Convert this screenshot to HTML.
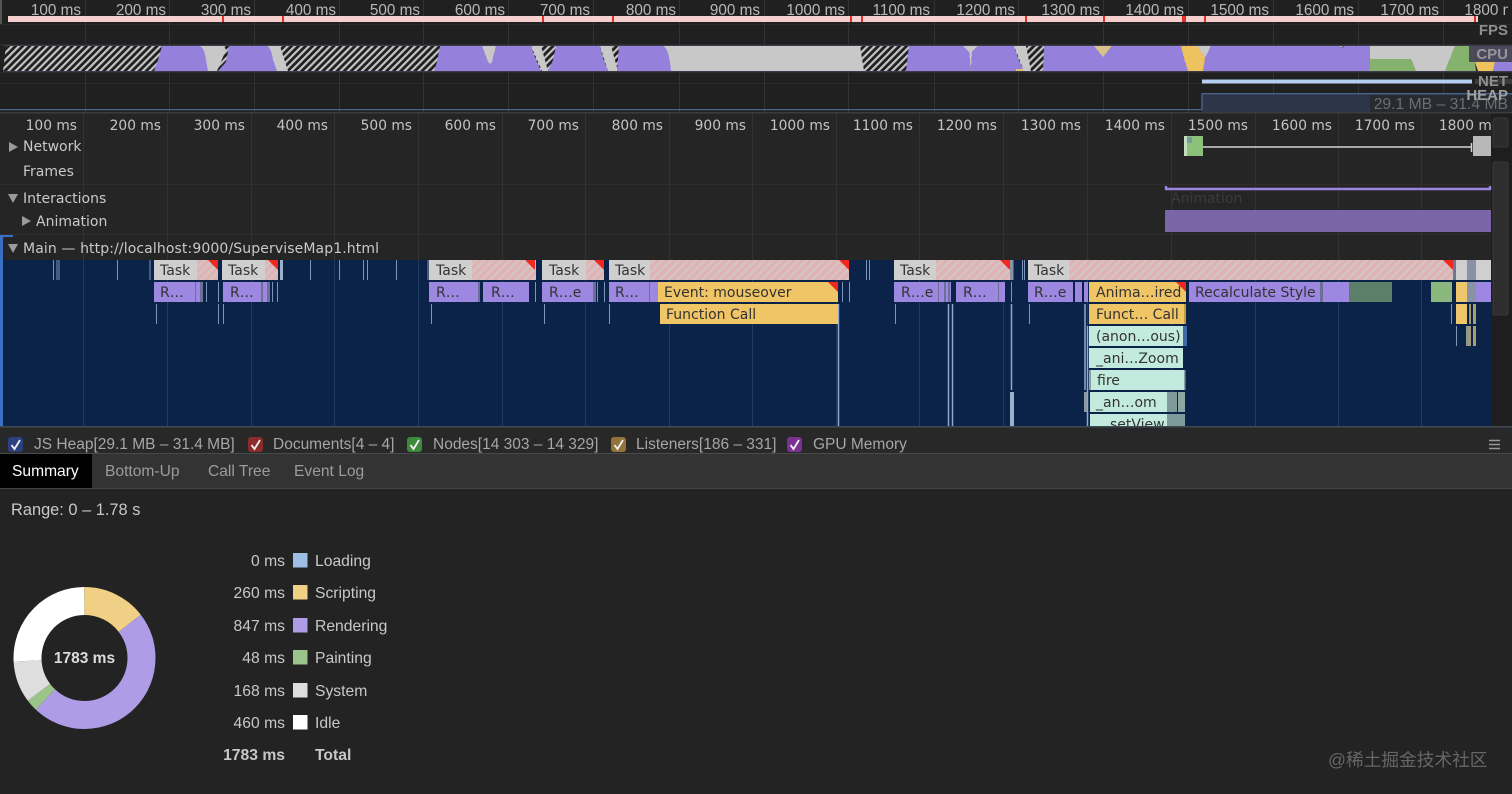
<!DOCTYPE html>
<html><head><meta charset="utf-8"><title>Performance</title>
<style>
html,body{margin:0;padding:0;background:#232323;width:1512px;height:794px;overflow:hidden}
svg{display:block;filter:blur(.3px)}
.ov{font:15.3px "Liberation Sans",sans-serif;fill:#b8b8b8;text-anchor:end}
.rl{font:13.8px "DejaVu Sans",sans-serif;fill:#c4c4c4;text-anchor:end}
.tk{font:14px "DejaVu Sans",sans-serif;fill:#c9c9c9}
.fl{font:14px "DejaVu Sans",sans-serif;fill:#333}
.lb{font:bold 15px "Liberation Sans",sans-serif;fill:#8f8f8f}
.lg{font:15.5px "Liberation Sans",sans-serif;fill:#a6a6a6}
.tb{font:15.6px "Liberation Sans",sans-serif;fill:#9c9c9c}
.sm{font:15.7px "Liberation Sans",sans-serif;fill:#c8c8c8}
.r{text-anchor:end}
.b{font-weight:bold}
</style></head><body>
<svg width="1512" height="794" viewBox="0 0 1512 794" xmlns="http://www.w3.org/2000/svg">
<defs>
<pattern id="h" width="5" height="5" patternUnits="userSpaceOnUse" patternTransform="rotate(45)"><rect width="5" height="5" fill="#1f1f1f"/><rect width="2.2" height="5" fill="#c4c4c4"/></pattern>
<pattern id="t" width="6" height="6" patternUnits="userSpaceOnUse" patternTransform="rotate(45)"><rect width="6" height="6" fill="#d6c2c2"/><rect width="3" height="6" fill="#e2b2b2"/></pattern>
<clipPath id="flame"><rect x="3" y="260" width="1488" height="166"/></clipPath>
<clipPath id="ruler"><rect x="0" y="113" width="1491" height="24"/></clipPath>
<clipPath id="top"><rect x="0" y="0" width="1508" height="30"/></clipPath>
</defs>

<!-- backgrounds -->
<rect width="1512" height="794" fill="#232323"/>
<rect width="1512" height="113" fill="#202020"/>
<rect y="113" width="1512" height="147" fill="#252525"/>
<rect x="1491" y="113" width="21" height="314" fill="#1e1e1e"/>

<!-- overview grid -->
<path stroke="#333" stroke-width="1" fill="none" d="M85.5 0V112M169.5 0V112M254.5 0V112M339.5 0V112M423.5 0V112M508.5 0V112M593.5 0V112M679.5 0V112M764.5 0V112M848.5 0V112M934.5 0V112M1018.5 0V112M1103.5 0V112M1188.5 0V112M1273.5 0V112M1358.5 0V112M1443.5 0V112"/>
<path stroke="#2b2b2b" d="M0 24.5H1512M0 44.5H1512M0 72.5H1512M0 83.5H1512"/>
<rect x="0" y="0" width="2" height="24" fill="#555"/>

<!-- overview labels -->
<g class="ov" clip-path="url(#top)">
<text x="81" y="15">100 ms</text><text x="166" y="15">200 ms</text><text x="251" y="15">300 ms</text><text x="336" y="15">400 ms</text><text x="420" y="15">500 ms</text><text x="505" y="15">600 ms</text><text x="590" y="15">700 ms</text><text x="676" y="15">800 ms</text><text x="760" y="15">900 ms</text><text x="845" y="15">1000 ms</text><text x="930" y="15">1100 ms</text><text x="1015" y="15">1200 ms</text><text x="1100" y="15">1300 ms</text><text x="1184" y="15">1400 ms</text><text x="1269" y="15">1500 ms</text><text x="1354" y="15">1600 ms</text><text x="1439" y="15">1700 ms</text><text x="1523" y="15">1800 ms</text>
</g>

<!-- FPS -->
<rect x="8" y="16" width="1470" height="6" fill="#f6cfcf"/>
<path stroke="#e0302c" stroke-width="2" d="M223 16V22M283 16V22M543 16V22M613 16V22M851 16V22M862 16V22M1026 16V22M1104 16V22M1183 16V22M1185 16V22M1205 16V22M1475 16V22"/>

<!-- CPU -->
<polygon points="6,46 1473,46 1473,71 3,71" fill="url(#h)"/>
<g fill="#c8c8c8">
<polygon points="198,46 224,46 226,50 217,71 206,71"/>
<polygon points="266,46 280,46 288,71 274,71"/>
<polygon points="482,46 496,46 492,62 490,64 488,62"/>
<polygon points="531,46 541,46 548,71 542,71"/>
<polygon points="600,46 611,46 618,71 608,71"/>
<polygon points="663,46 860,46 864,71 671,71"/>
<polygon points="963,46 978,46 972,52 971,71 969,52"/>
<polygon points="1014,46 1026,46 1031,71 1024,71"/>
<polygon points="1197,46 1211,46 1205,58"/>
<polygon points="1370,46 1455,46 1445,71 1416,71 1411,59 1370,59"/>
</g>
<g fill="#9580dc">
<path d="M162 46H199Q204 46 206 60L208 71H154L158 60Z"/>
<path d="M229 46H266Q271 46 273 60L277 71H218L226 62Z"/>
<path d="M440 46H482L488 62 490 64 492 62 496 46H531L534 55 541 71H434L437 62Z"/>
<path d="M556 46H600L603 58 608 71H548L553 60Z"/>
<path d="M619 46H663Q669 48 671 71H617Z"/>
<path d="M909 46H963L969 52 971 71 972 52 978 46H1014L1018 58 1024 71H906Z"/>
<path d="M1044 46H1094L1103 57 1112 46H1181L1184 58 1188 71H1043Z"/>
<path d="M1211 46H1340L1342 48 1344 46H1370V71H1203L1205 58Z"/>
<polygon points="1473,46 1512,46 1512,71 1493,71 1495,62 1475,62"/>
</g>
<polygon points="1094,46 1112,46 1103,57" fill="#d8c48a"/>
<polygon points="1181,46 1197,46 1205,58 1203,71 1188,71 1184,58" fill="#eec35f"/>
<polygon points="1370,59 1411,59 1416,71 1370,71" fill="#85b36d"/>
<polygon points="1455,46 1473,46 1475,62 1476,71 1445,71" fill="#85b36d"/>
<polygon points="1475,62 1495,62 1493,71 1478,71" fill="#eec35f"/>
<rect x="1016" y="69" width="8" height="2" fill="#e0c070"/>
<path stroke="#3c3a4a" d="M3 45.5H1512M3 71.5H1512"/>
<rect x="1469" y="46" width="43" height="16" fill="#45434f" opacity=".92"/>
<text class="lb" x="1508" y="35" text-anchor="end">FPS</text>
<text class="lb" x="1508" y="59" text-anchor="end" style="fill:#96969c">CPU</text>

<!-- NET -->
<rect x="1202" y="79.5" width="270" height="4" fill="#b4cdf0"/>
<rect x="1475" y="79" width="37" height="5" fill="#3a3a3a"/>

<!-- HEAP -->
<polygon points="1202,94 1512,94 1512,112 1202,112" fill="#2c3648"/>
<path fill="none" stroke="#4f6f9c" stroke-width="1.2" d="M0 109.7H1202V93.7H1512"/>
<rect x="1370" y="95" width="142" height="17" fill="#272a30"/>
<text x="1508" y="109" text-anchor="end" style="font:15.7px 'Liberation Sans',sans-serif;fill:#6e6e6e">29.1 MB – 31.4 MB</text>
<text class="lb" x="1508" y="86" text-anchor="end">NET</text>
<text class="lb" x="1508" y="100" text-anchor="end" style="fill:#a0a0a0">HEAP</text>
<rect y="112" width="1512" height="1.5" fill="#3c3c3c"/>

<!-- lower grid -->
<path stroke="#333" d="M83.5 113V260M167.5 113V260M251.5 113V260M334.5 113V260M418.5 113V260M502.5 113V260M585.5 113V260M669.5 113V260M752.5 113V260M836.5 113V260M919.5 113V260M1003.5 113V260M1087.5 113V260M1171.5 113V260M1255.5 113V260M1338.5 113V260M1421.5 113V260"/>
<path stroke="#2e2e2e" d="M0 184.5H1491M0 234.5H1491"/>

<!-- ruler -->
<g class="rl" clip-path="url(#ruler)">
<text x="77" y="130">100 ms</text><text x="161" y="130">200 ms</text><text x="245" y="130">300 ms</text><text x="328" y="130">400 ms</text><text x="412" y="130">500 ms</text><text x="496" y="130">600 ms</text><text x="579" y="130">700 ms</text><text x="663" y="130">800 ms</text><text x="746" y="130">900 ms</text><text x="830" y="130">1000 ms</text><text x="913" y="130">1100 ms</text><text x="997" y="130">1200 ms</text><text x="1081" y="130">1300 ms</text><text x="1165" y="130">1400 ms</text><text x="1248" y="130">1500 ms</text><text x="1332" y="130">1600 ms</text><text x="1415" y="130">1700 ms</text><text x="1499" y="130">1800 ms</text>
</g>

<!-- track headers -->
<polygon points="9,142 9,152 18,147" fill="#9a9a9a"/>
<text class="tk" x="23" y="151">Network</text>
<text class="tk" x="23" y="176">Frames</text>
<polygon points="8,194 18,194 13,203" fill="#9a9a9a"/>
<text class="tk" x="23" y="203">Interactions</text>
<polygon points="22,216 22,226 31,221" fill="#9a9a9a"/>
<text class="tk" x="36" y="226">Animation</text>
<polygon points="8,244 18,244 13,253" fill="#9a9a9a"/>
<text class="tk" x="23" y="253" textLength="356">Main — http://localhost:9000/SuperviseMap1.html</text>

<!-- network -->
<rect x="1184" y="136" width="19" height="20" fill="#8dc07a"/>
<rect x="1184" y="136" width="3" height="20" fill="#c4dcc0"/>
<rect x="1187" y="137" width="5" height="6" fill="#6f9fa0"/>
<path stroke="#d4d4d4" stroke-width="1.5" d="M1203 147H1471M1471.5 143V152"/>
<rect x="1473" y="136" width="18" height="20" fill="#b8b8b8"/>

<!-- interactions -->
<path fill="none" stroke="#9a85e0" stroke-width="2.4" d="M1166 186V189H1490V186"/>
<text x="1171" y="203" style="font:14px 'DejaVu Sans',sans-serif;fill:#3a3a3a">Animation</text>
<rect x="1165" y="210" width="326" height="22" fill="#7a65a8"/>

<!-- flame -->
<rect x="0" y="235" width="13" height="2" fill="#3a6fc4"/>
<rect x="0" y="235" width="3" height="191" fill="#3a6fc4"/>
<rect x="3" y="260" width="1488" height="166" fill="#0b2249"/>
<path stroke="#1e3a63" d="M83.5 260V426M167.5 260V426M251.5 260V426M334.5 260V426M418.5 260V426M502.5 260V426M585.5 260V426M669.5 260V426M752.5 260V426M836.5 260V426M919.5 260V426M1003.5 260V426M1087.5 260V426M1171.5 260V426M1255.5 260V426M1338.5 260V426M1421.5 260V426"/>

<g clip-path="url(#flame)">
<!-- small slices -->
<g stroke="#7c95b8" fill="none">
<path d="M53.5 260V280M57 260V280M59 260V280M117.5 260V280M150 260V280M281.5 260V280M310.5 260V280M339.5 260V280M363.5 260V280M367.5 260V280M396.5 260V280M428 260V280M866.5 260V280M869.5 260V280M1024.5 260V280M1022.5 260V280M1013 260V280"/>
<path d="M206.5 282V302M218.5 282V302M272.5 282V302M277.5 282V302M535.5 282V302M597.5 282V302M604.5 282V302M842.5 282V302M849.5 282V302M1011.5 282V302"/>
<path d="M156.5 304V324M218.5 304V324M223.5 304V324M431.5 304V324M544.5 304V324M609.5 304V324M895.5 304V324M1029.5 304V324M1456.5 326V346M1451.5 304V324"/>
<path stroke="#8fa9cc" stroke-width="1.5" d="M838.5 304V426M948.5 304V426M952.5 304V426M1011.5 304V390"/>
<path stroke="#8fa9cc" stroke-width="1.5" d="M1085 304V390M1087.5 326V426"/>
</g>
<rect x="1010" y="392" width="4" height="34" fill="#9ab0c8"/>
<rect x="1084" y="392" width="3" height="20" fill="#8c9aa8"/>

<!-- Task row -->
<g>
<rect x="154" y="260" width="64" height="20" fill="url(#t)"/><rect x="154" y="260" width="43" height="20" fill="#cfcfcf"/><polygon points="208,260 218,260 218,270" fill="#f0281e"/>
<rect x="222" y="260" width="56" height="20" fill="url(#t)"/><rect x="222" y="260" width="43" height="20" fill="#cfcfcf"/><polygon points="268,260 278,260 278,270" fill="#f0281e"/>
<rect x="280" y="260" width="3" height="20" fill="#9ab0c8"/>
<rect x="429" y="260" width="107" height="20" fill="url(#t)"/><rect x="429" y="260" width="43" height="20" fill="#cfcfcf"/><polygon points="525,260 535,260 535,270" fill="#f0281e"/>
<rect x="542" y="260" width="62" height="20" fill="url(#t)"/><rect x="542" y="260" width="44" height="20" fill="#cfcfcf"/><polygon points="594,260 604,260 604,270" fill="#f0281e"/>
<rect x="609" y="260" width="240" height="20" fill="url(#t)"/><rect x="609" y="260" width="41" height="20" fill="#cfcfcf"/><polygon points="839,260 849,260 849,270" fill="#f0281e"/>
<rect x="894" y="260" width="116" height="20" fill="url(#t)"/><rect x="894" y="260" width="42" height="20" fill="#cfcfcf"/><polygon points="1000,260 1010,260 1010,270" fill="#f0281e"/><rect x="1010" y="260" width="3" height="20" fill="#8c94a4"/>
<rect x="1028" y="260" width="425" height="20" fill="url(#t)"/><rect x="1028" y="260" width="41" height="20" fill="#cfcfcf"/><polygon points="1443,260 1453,260 1453,270" fill="#f0281e"/>
<rect x="1456" y="260" width="35" height="20" fill="#cfcfcf"/><rect x="1467" y="260" width="9" height="20" fill="#8a93a6"/><rect x="1453" y="260" width="3" height="20" fill="#6b7a90"/>
</g>
<g class="fl">
<text x="160" y="275">Task</text><text x="228" y="275">Task</text><text x="436" y="275">Task</text><text x="549" y="275">Task</text><text x="615" y="275">Task</text><text x="900" y="275">Task</text><text x="1034" y="275">Task</text>
</g>

<!-- row 2 -->
<g fill="#9d87e0">
<rect x="154" y="282" width="46" height="20"/><rect x="223" y="282" width="44" height="20"/><rect x="429" y="282" width="51" height="20"/><rect x="483" y="282" width="46" height="20"/><rect x="542" y="282" width="54" height="20"/><rect x="609" y="282" width="49" height="20"/><rect x="894" y="282" width="57" height="20"/><rect x="956" y="282" width="49" height="20"/><rect x="1028" y="282" width="45" height="20"/><rect x="1075" y="282" width="7" height="20"/><rect x="1084" y="282" width="4" height="20"/><rect x="1189" y="282" width="131" height="20"/><rect x="1323" y="282" width="26" height="20"/><rect x="1476" y="282" width="15" height="20"/>
</g>
<g fill="#6c6f98">
<rect x="195" y="282" width="1" height="20"/><rect x="200" y="282" width="3" height="20"/><rect x="261" y="282" width="2" height="20"/><rect x="267" y="282" width="3" height="20"/><rect x="478" y="282" width="2" height="20"/><rect x="593" y="282" width="3" height="20"/><rect x="649" y="282" width="1" height="20"/><rect x="938" y="282" width="1" height="20"/><rect x="944" y="282" width="2" height="20"/><rect x="948" y="282" width="2" height="20"/><rect x="998" y="282" width="1" height="20"/><rect x="1320" y="282" width="3" height="20"/>
</g>
<rect x="1349" y="282" width="43" height="20" fill="#5c7f6a"/>
<rect x="1431" y="282" width="21" height="20" fill="#8ab87c"/>
<rect x="1456" y="282" width="11" height="20" fill="#eec66c"/>
<rect x="1467" y="282" width="9" height="20" fill="#8a93a6"/>
<rect x="658" y="282" width="180" height="20" fill="#f0c566"/><polygon points="828,282 838,282 838,292" fill="#f0281e"/>
<rect x="1089" y="282" width="97" height="20" fill="#f0c566"/><polygon points="1176,282 1186,282 1186,292" fill="#f0281e"/>
<g class="fl">
<text x="160" y="297">R…</text><text x="230" y="297">R…</text><text x="436" y="297">R…</text><text x="491" y="297">R…</text><text x="549" y="297">R…e</text><text x="615" y="297">R…</text><text x="664" y="297">Event: mouseover</text><text x="901" y="297">R…e</text><text x="963" y="297">R…</text><text x="1034" y="297">R…e</text><text x="1096" y="297">Anima…ired</text><text x="1195" y="297">Recalculate Style</text>
</g>

<!-- row 3 -->
<rect x="660" y="304" width="178" height="20" fill="#f0c566"/>
<rect x="1089" y="304" width="97" height="20" fill="#f0c566"/><rect x="1184" y="304" width="2" height="20" fill="#c89a40"/>
<rect x="1456" y="304" width="11" height="20" fill="#eec66c"/><rect x="1469" y="304" width="2" height="20" fill="#9a9a70"/><rect x="1473" y="304" width="3" height="20" fill="#a8a070"/>
<g class="fl"><text x="666" y="319">Function Call</text><text x="1096" y="319">Funct… Call</text></g>

<!-- mint rows -->
<g fill="#c2ebdd">
<rect x="1089" y="326" width="94" height="20"/>
<rect x="1089" y="348" width="94" height="20"/>
<rect x="1090" y="370" width="94" height="20"/>
<rect x="1090" y="392" width="77" height="20"/>
<rect x="1090" y="414" width="77" height="14"/>
</g>
<rect x="1183" y="326" width="4" height="20" fill="#3f6aa8"/>
<rect x="1089" y="370" width="2" height="20" fill="#8aa0a0"/>
<rect x="1184" y="370" width="1.5" height="20" fill="#8aa0a0"/>
<rect x="1167" y="392" width="10" height="20" fill="#7e9a9a"/>
<rect x="1178" y="392" width="7" height="20" fill="#8da6a2"/>
<rect x="1167" y="414" width="18" height="14" fill="#7e9a9a"/>
<rect x="1466" y="326" width="2" height="20" fill="#8a9a8a"/><rect x="1468" y="326" width="3" height="20" fill="#9a9a80"/><rect x="1473" y="326" width="3" height="20" fill="#a8a070"/>
<g class="fl">
<text x="1096" y="341">(anon…ous)</text>
<text x="1096" y="363">_ani…Zoom</text>
<text x="1097" y="385">fire</text>
<text x="1096" y="407">_an…om</text>
<text x="1103" y="429">_setView</text>
</g>
</g>

<!-- scrollbars -->
<rect x="1493" y="118" width="15" height="29" rx="2" fill="#2b2b2b" stroke="#383838"/>
<rect x="1493" y="162" width="15" height="153" rx="2" fill="#2e2e2e" stroke="#3a3a3a"/>

<!-- legend strip -->
<rect y="426" width="1512" height="1.5" fill="#3f4a52"/>
<rect y="427.5" width="1512" height="26" fill="#282828"/>
<rect y="453" width="1512" height="1" fill="#4a4a4a"/>
<g>
<rect x="8" y="437" width="15" height="15" rx="3" fill="#2c4080"/>
<rect x="248" y="437" width="15" height="15" rx="3" fill="#8a2c2c"/>
<rect x="407" y="437" width="15" height="15" rx="3" fill="#3e8a3c"/>
<rect x="611" y="437" width="15" height="15" rx="3" fill="#94733a"/>
<rect x="787" y="437" width="15" height="15" rx="3" fill="#7a3192"/>
<path fill="none" stroke="#f2f2f2" stroke-width="1.8" d="M11.5 445L14.5 449 20 440M251.5 445L254.5 449 260 440M410.5 445L413.5 449 419 440M614.5 445L617.5 449 623 440M790.5 445L793.5 449 799 440"/>
</g>
<g class="lg">
<text x="34" y="449">JS Heap[29.1 MB – 31.4 MB]</text>
<text x="273" y="449">Documents[4 – 4]</text>
<text x="433" y="449">Nodes[14 303 – 14 329]</text>
<text x="636" y="449">Listeners[186 – 331]</text>
<text x="813" y="449">GPU Memory</text>
</g>
<path stroke="#9a9a9a" stroke-width="1.5" d="M1489 440.5H1500M1489 444.5H1500M1489 448.5H1500"/>

<!-- tabs -->
<rect y="454" width="1512" height="34" fill="#333"/>
<rect y="488" width="1512" height="1" fill="#444"/>
<rect y="454" width="92" height="34" fill="#000"/>
<text class="tb" x="12" y="476" style="fill:#fff">Summary</text>
<text class="tb" x="105" y="476">Bottom-Up</text>
<text class="tb" x="208" y="476">Call Tree</text>
<text class="tb" x="294" y="476">Event Log</text>

<!-- summary -->
<text class="sm" x="11" y="515" style="font-size:16.4px">Range: 0 – 1.78 s</text>

<!-- donut -->
<g fill="none" stroke-width="28" transform="rotate(-90 84.5 658)">
<circle cx="84.5" cy="658" r="57" stroke="#efd084" pathLength="1783" stroke-dasharray="260 1523" stroke-dashoffset="0"/>
<circle cx="84.5" cy="658" r="57" stroke="#af9ce6" pathLength="1783" stroke-dasharray="847 936" stroke-dashoffset="-260"/>
<circle cx="84.5" cy="658" r="57" stroke="#9ac48a" pathLength="1783" stroke-dasharray="48 1735" stroke-dashoffset="-1107"/>
<circle cx="84.5" cy="658" r="57" stroke="#dedede" pathLength="1783" stroke-dasharray="168 1615" stroke-dashoffset="-1155"/>
<circle cx="84.5" cy="658" r="57" stroke="#fff" pathLength="1783" stroke-dasharray="460 1323" stroke-dashoffset="-1323"/>
</g>
<text x="84.5" y="663" text-anchor="middle" style="font:bold 15.5px 'Liberation Sans',sans-serif;fill:#dcdcdc">1783 ms</text>

<!-- legend -->
<g class="sm">
<text class="r" x="285" y="566">0 ms</text>
<text class="r" x="285" y="598">260 ms</text>
<text class="r" x="285" y="631">847 ms</text>
<text class="r" x="285" y="663">48 ms</text>
<text class="r" x="285" y="696">168 ms</text>
<text class="r" x="285" y="728">460 ms</text>
<text class="r b" x="285" y="760">1783 ms</text>
<text x="315" y="566">Loading</text>
<text x="315" y="598">Scripting</text>
<text x="315" y="631">Rendering</text>
<text x="315" y="663">Painting</text>
<text x="315" y="696">System</text>
<text x="315" y="728">Idle</text>
<text class="b" x="315" y="760">Total</text>
</g>
<rect x="293" y="553" width="14.5" height="14.5" fill="#9dbfe6"/>
<rect x="293" y="585" width="14.5" height="14.5" fill="#efd084"/>
<rect x="293" y="618" width="14.5" height="14.5" fill="#af9ce6"/>
<rect x="293" y="650" width="14.5" height="14.5" fill="#9ac48a"/>
<rect x="293" y="683" width="14.5" height="14.5" fill="#dedede"/>
<rect x="293" y="715" width="14.5" height="14.5" fill="#fff"/>

<!-- watermark -->
<text x="1328" y="766" style="font:17.7px 'Liberation Sans','Noto Sans CJK SC',sans-serif;fill:#666">@稀土掘金技术社区</text>
</svg>
</body></html>
